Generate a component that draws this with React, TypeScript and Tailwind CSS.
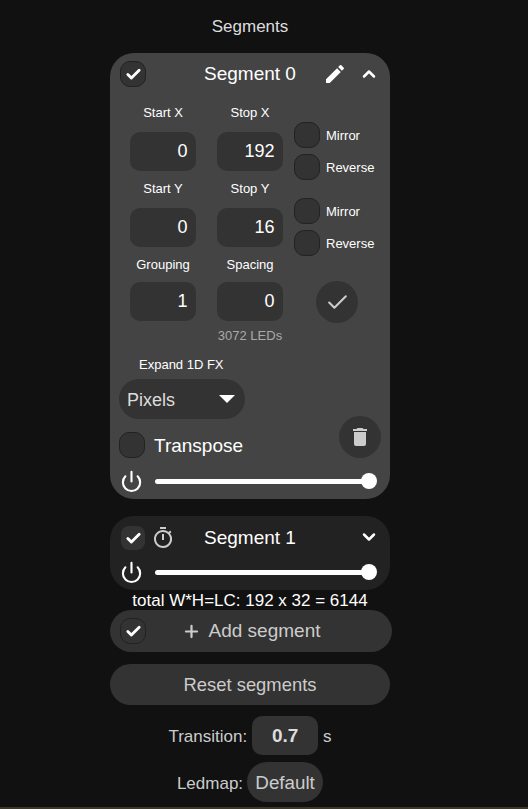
import { ChevronDown, ChevronUp, Check, Plus, Power } from "lucide-react";
import { MdEdit, MdDelete, MdOutlineTimer } from "react-icons/md";

function TickBox({ checked, className = "" }: { checked?: boolean; className?: string }) {
  return (
    <div
      className={`flex size-[26px] shrink-0 items-center justify-center rounded-[10px] border border-[#222] bg-[#333] ${className}`}
    >
      {checked && <Check size={17} strokeWidth={4} className="text-white" />}
    </div>
  );
}

function NumField({ label, value, tight }: { label: string; value: string; tight?: boolean }) {
  return (
    <div className="flex w-[87px] flex-col items-center">
      <div className={`pl-[1px] text-[13px] leading-[19px] text-white ${tight ? "h-[27px]" : "h-[29px]"}`}>{label}</div>
      <div className="h-[39px] w-[66px] rounded-[10px] bg-[#333] pr-[8px] text-right text-[18px] leading-[39px] text-white">
        {value}
      </div>
    </div>
  );
}

function FlipBoxes() {
  return (
    <div className="ml-[1px] flex flex-col gap-[6px] pt-[19px]">
      <div className="flex items-center gap-[6px]">
        <TickBox />
        <span className="pt-[2px] text-[13px] text-white">Mirror</span>
      </div>
      <div className="flex items-center gap-[6px]">
        <TickBox />
        <span className="pt-[2px] text-[13px] text-white">Reverse</span>
      </div>
    </div>
  );
}

function Slider() {
  return (
    <div className="flex h-[20px] items-center">
      <Power size={23} strokeWidth={2.2} className="ml-[10px] text-white" />
      <div className="relative ml-[12px] h-[5px] w-[221px] rounded-full bg-white">
        <div className="absolute top-[-6px] right-[-1px] size-[16px] rounded-full bg-white"></div>
      </div>
    </div>
  );
}

export default function App() {
  return (
    <div
      className="flex h-[809px] w-[528px] flex-col overflow-hidden bg-[#111]"
      style={{ fontFamily: '"Liberation Sans", Arial, sans-serif' }}
    >
      <div className="flex w-[500px] flex-col items-center">
        <div className="pt-[18px] text-[17px] leading-[18px] text-[#ddd]">Segments</div>

        {/* SEGMENT 0 */}
        <div className="mt-[17px] h-[446px] w-[280px] rounded-[24px] bg-[#444]">
          <div className="relative flex h-[42px] items-center pl-[10px]">
            <TickBox checked />
            <div className="absolute inset-x-0 text-center text-[19px] text-white">Segment 0</div>
            <MdEdit size={24} className="absolute top-[9px] left-[213px] text-white" />
            <ChevronUp size={20} strokeWidth={3} className="absolute top-[11px] left-[249px] text-white" />
          </div>

          <div className="mt-[8px] flex h-[76px] pl-[9px]">
            <NumField label="Start X" value="0" />
            <NumField label="Stop X" value="192" />
            <FlipBoxes />
          </div>
          <div className="flex h-[76px] pl-[9px]">
            <NumField label="Start Y" value="0" />
            <NumField label="Stop Y" value="16" />
            <FlipBoxes />
          </div>
          <div className="flex pl-[9px]">
            <NumField label="Grouping" value="1" tight />
            <NumField label="Spacing" value="0" tight />
            <div className="ml-[23px] flex size-[42px] translate-y-[26px] items-center justify-center rounded-full bg-[#333]">
              <Check size={25} strokeWidth={2} className="text-[#ccc]" />
            </div>
          </div>

          <div className="mt-[6px] text-center text-[13px] leading-[18px] text-[#aaa]">3072 LEDs</div>
          <div className="mt-[11px] pl-[29px] text-[13px] leading-[18px] text-white">Expand 1D FX</div>
          <div className="mt-[5px] ml-[9px] flex h-[40px] w-[126px] items-center justify-between rounded-[20px] bg-[#333] pr-[10px] pl-[8px] text-[18px] text-[#ddd]">
            <span className="pt-[2px]">Pixels</span>
            <div className="h-0 w-0 border-x-[8px] border-t-[8px] border-x-transparent border-t-white"></div>
          </div>

          <div className="relative mt-[13px] flex h-[26px] items-center pl-[9px]">
            <TickBox />
            <span className="ml-[9px] pt-[3px] text-[19px] text-white">Transpose</span>
            <div className="absolute top-[-16px] left-[229px] flex size-[42px] items-center justify-center rounded-full bg-[#333]">
              <MdDelete size={24} className="text-[#ccc]" />
            </div>
          </div>
          <div className="mt-[13px]">
            <Slider />
          </div>
        </div>

        {/* SEGMENT 1 */}
        <div className="mt-[17px] h-[74px] w-[280px] rounded-[24px] bg-[#222]">
          <div className="relative flex h-[46px] items-center pb-[2px] pl-[11px]">
            <div className="flex size-[24px] items-center justify-center rounded-[8px] bg-[#333]">
              <Check size={17} strokeWidth={4} className="text-white" />
            </div>
            <MdOutlineTimer size={24} className="ml-[6px] text-[#ccc]" />
            <div className="absolute inset-x-0 text-center text-[19px] text-white">Segment 1</div>
            <ChevronDown size={20} strokeWidth={3} className="absolute top-[11px] left-[249px] text-white" />
          </div>
          <Slider />
        </div>

        <div className="h-[20px] pt-[1px] text-[17px] leading-[20px] text-white">total W*H=LC: 192 x 32 = 6144</div>

        <div className="relative ml-[2px] flex h-[42px] w-[282px] items-center justify-center rounded-[21px] bg-[#333] text-[19px] text-[#ccc]">
          <TickBox checked className="absolute left-[10px] bg-transparent" />
          <Plus size={19} strokeWidth={2.8} className="mr-[8px]" />
          Add segment
        </div>

        <div className="mt-[12px] flex h-[41px] w-[280px] items-center justify-center rounded-[21px] bg-[#333] text-[18.4px] text-[#ccc]">
          Reset segments
        </div>

        <div className="mt-[11px] flex h-[39px] items-center text-[17px] text-[#ccc]">
          <span className="pt-[3px]">Transition:</span>
          <div className="mx-[5px] h-[39px] w-[66px] rounded-[10px] bg-[#333] text-center text-[19px] font-bold leading-[39px] text-[#ddd]">
            0.7
          </div>
          <span className="pt-[3px]">s</span>
        </div>

        <div className="mt-[7px] flex h-[40px] items-center text-[17px] text-[#ccc]">
          <span className="pt-[4px]">Ledmap:</span>
          <div className="ml-[4px] flex h-[40px] w-[76px] items-center justify-center rounded-[20px] bg-[#333] pt-[2px] text-[18.8px]">
            Default
          </div>
        </div>
      </div>
      <div className="mt-auto h-[2px] bg-[#3d362a]"></div>
    </div>
  );
}
